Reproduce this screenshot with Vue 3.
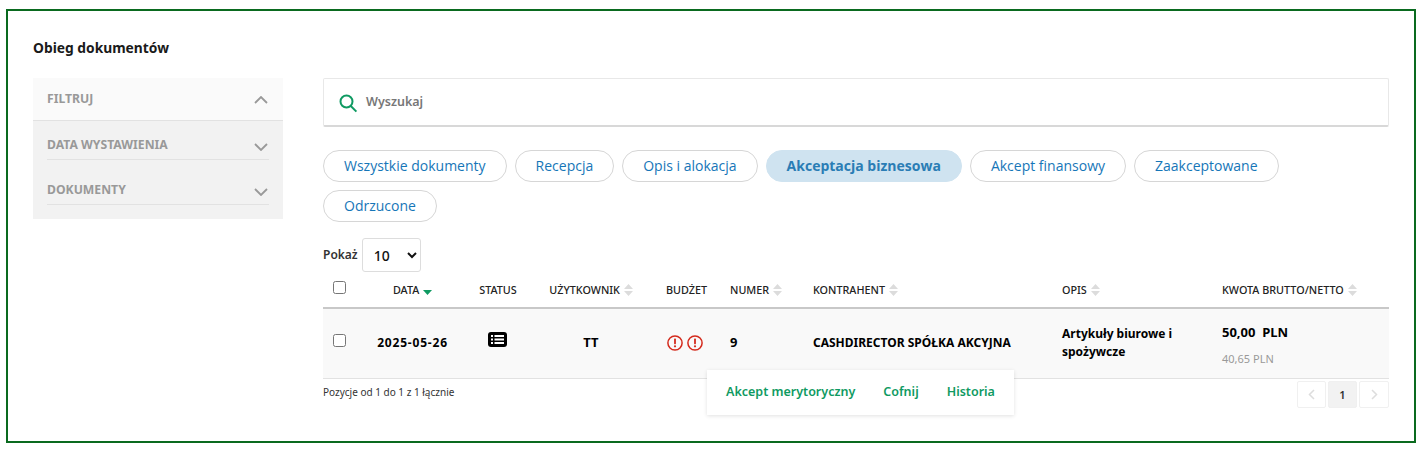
<script setup>
const filters = ['DATA WYSTAWIENIA', 'DOKUMENTY']
const tabs = [
  { label: 'Wszystkie dokumenty' },
  { label: 'Recepcja' },
  { label: 'Opis i alokacja' },
  { label: 'Akceptacja biznesowa', active: true },
  { label: 'Akcept finansowy' },
  { label: 'Zaakceptowane' },
  { label: 'Odrzucone' }
]
</script>

<template>
  <div class="frame">
    <h1 class="title">Obieg dokumentów</h1>
    <div class="columns">
      <aside class="side">
        <div class="side-head">
          <span>FILTRUJ</span>
          <svg class="chev" width="14" height="8" viewBox="0 0 14 8"><path d="M1 7l6-6 6 6" /></svg>
        </div>
        <div class="side-body">
          <div v-for="f in filters" :key="f" class="side-row">
            <span>{{ f }}</span>
            <svg class="chev" width="14" height="8" viewBox="0 0 14 8"><path d="M1 1l6 6 6-6" /></svg>
          </div>
        </div>
      </aside>

      <main class="main">
        <div class="search">
          <svg width="19" height="19" viewBox="0 0 19 19" class="search-ico">
            <circle cx="7.500" cy="7.500" r="6" />
            <path d="M11.800 12l5.600 5.600" />
          </svg>
          <span>Wyszukaj</span>
        </div>

        <div class="tabs">
          <a v-for="t in tabs" :key="t.label" class="tab" :class="{ active: t.active }">{{ t.label }}</a>
        </div>

        <div class="length">
          <span class="length-label">Pokaż</span>
          <select class="sel"><option>10</option></select>
        </div>

        <table class="grid">
          <colgroup>
            <col style="width:40px" /><col style="width:99px" /><col style="width:72px" /><col style="width:114px" />
            <col style="width:72px" /><col style="width:83px" /><col style="width:249px" /><col style="width:160px" /><col />
          </colgroup>
          <thead>
            <tr>
              <th class="chk"><input type="checkbox" /></th>
              <th class="c">DATA <svg class="sort down" width="9" height="5" viewBox="0 0 9 5"><path d="M0 0h9L4.500 5z" fill="#0f9a62" /></svg></th>
              <th class="c">STATUS</th>
              <th class="c">UŻYTKOWNIK <svg class="sort" width="9" height="12" viewBox="0 0 9 12"><path d="M0 5L4.500 0 9 5zM0 7h9l-4.500 5z" fill="#dcdcdc" /></svg></th>
              <th class="c bud">BUDŻET</th>
              <th>NUMER <svg class="sort" width="9" height="12" viewBox="0 0 9 12"><path d="M0 5L4.500 0 9 5zM0 7h9l-4.500 5z" fill="#dcdcdc" /></svg></th>
              <th>KONTRAHENT <svg class="sort" width="9" height="12" viewBox="0 0 9 12"><path d="M0 5L4.500 0 9 5zM0 7h9l-4.500 5z" fill="#dcdcdc" /></svg></th>
              <th>OPIS <svg class="sort" width="9" height="12" viewBox="0 0 9 12"><path d="M0 5L4.500 0 9 5zM0 7h9l-4.500 5z" fill="#dcdcdc" /></svg></th>
              <th>KWOTA BRUTTO/NETTO <svg class="sort" width="9" height="12" viewBox="0 0 9 12"><path d="M0 5L4.500 0 9 5zM0 7h9l-4.500 5z" fill="#dcdcdc" /></svg></th>
            </tr>
          </thead>
          <tbody>
            <tr>
              <td class="chk"><input type="checkbox" /></td>
              <td class="c date">2025-05-26</td>
              <td class="c status">
                <svg class="st" width="19" height="15" viewBox="0 0 19 15">
                  <rect width="19" height="15" rx="3" fill="#000" />
                  <path d="M3 3h2v2H3zM3 6.500h2v2H3zM3 10h2v2H3zM6.500 3H16v2H6.500zM6.500 6.500H16v2H6.500zM6.500 10H16v2H6.500z" fill="#fff" />
                </svg>
              </td>
              <td class="c big">TT</td>
              <td class="c bud">
                <span class="alerts">
                  <svg v-for="n in 2" :key="n" width="16" height="16" viewBox="0 0 16 16">
                    <circle cx="8" cy="8" r="7.100" fill="none" stroke="#d42a1c" stroke-width="1.500" />
                    <rect x="7.100" y="3.600" width="1.800" height="5.600" rx=".6" fill="#d42a1c" />
                    <circle cx="8" cy="11.300" r="1.100" fill="#d42a1c" />
                  </svg>
                </span>
              </td>
              <td class="big">9</td>
              <td>CASHDIRECTOR SPÓŁKA AKCYJNA</td>
              <td class="desc">Artykuły biurowe i spożywcze</td>
              <td class="amount">
                <div class="gross">50,00&nbsp; PLN</div>
                <div class="net">40,65 PLN</div>
              </td>
            </tr>
          </tbody>
        </table>

        <div class="foot">
          <span class="info">Pozycje od 1 do 1 z 1 łącznie</span>
          <div class="pager">
            <span class="pg"><svg width="7" height="11" viewBox="0 0 7 11"><path d="M6 1L1.500 5.500 6 10" /></svg></span>
            <span class="pg cur">1</span>
            <span class="pg"><svg width="7" height="11" viewBox="0 0 7 11"><path d="M1 1l4.500 4.500L1 10" /></svg></span>
          </div>
          <div class="actions">
            <a>Akcept merytoryczny</a>
            <a>Cofnij</a>
            <a>Historia</a>
          </div>
        </div>
      </main>
    </div>
  </div>
</template>

<style>
html, body { background: #fff; }
</style>

<style scoped>
.frame {
  box-sizing: border-box;
  width: 1410px;
  height: 434px;
  margin: 9px 0 0 6px;
  border: 2px solid #0a6a1f;
  padding: 27px 25px 0;
  font-family: "Noto Sans", sans-serif;
  color: #111;
  background: #fff;
}
.title {
  margin: 0;
  font-size: 13.800px;
  line-height: 20px;
  font-weight: 700;
  color: #1a1a1a;
}
.columns {
  display: flex;
  gap: 40px;
  margin-top: 20px;
  width: 1356px;
}
.side { width: 250px; flex: none; align-self: flex-start; background: #f2f2f2; font-size: 12.200px; font-weight: 700; color: #999; }
.side-head {
  height: 43px;
  box-sizing: border-box;
  background: #fafafa;
  border-bottom: 1px solid #e2e2e2;
  padding: 0 15px 2px 14px;
  display: flex;
  align-items: center;
  justify-content: space-between;
}
.side-body { padding: 0 14px 14px; }
.side-row {
  height: 39px;
  box-sizing: border-box;
  padding-top: 8px;
  border-bottom: 1px solid #e2e2e2;
  display: flex;
  align-items: center;
  justify-content: space-between;
}
.side-row + .side-row { margin-top: 6px; }
.chev { fill: none; stroke: #999; stroke-width: 1.800; }
.side-head .chev { margin-top: 3px; }
.side-row .chev { margin: 5px 1px 0 0; }
.main { flex: 1; min-width: 0; position: relative; }
.search {
  height: 49px;
  box-sizing: border-box;
  border: 1px solid #e8e8e8;
  border-bottom: 2px solid #d8d8d8;
  border-radius: 2px;
  padding: 0 0 2px 15px;
  display: flex;
  align-items: center;
  gap: 8px;
  font-size: 12.500px;
  font-weight: 600;
  color: #777;
}
.search-ico { fill: none; stroke: #0f9a62; stroke-width: 2; margin-top: 5px; }
.tabs { display: flex; flex-wrap: wrap; gap: 8px; margin-top: 23px; font-family: "Open Sans", sans-serif; }
.tab {
  height: 32px;
  box-sizing: border-box;
  padding: 0 20px;
  border: 1px solid #d6d6d6;
  border-radius: 16px;
  font-size: 14px;
  line-height: 30px;
  color: #1676b8;
}
.tab.active { background: #cfe3f0; border-color: #cfe3f0; font-weight: 700; color: #2a7db5; }
.length { display: flex; align-items: center; gap: 4px; margin-top: 16px; font-size: 12px; font-weight: 600; color: #333; }
.length-label { padding-bottom: 2px; }
.sel {
  width: 59px;
  height: 34px;
  box-sizing: border-box;
  border: 1px solid #ddd;
  border-radius: 3px;
  background: #fff;
  font-family: inherit;
  font-size: 14px;
  font-weight: 500;
  color: #111;
  padding-left: 7px;
}
.grid { width: 100%; table-layout: fixed; border-collapse: collapse; }
.grid th {
  height: 36px;
  box-sizing: border-box;
  padding: 0 10px;
  border-bottom: 2px solid #c8c8c8;
  font-size: 10.800px;
  font-weight: 500;
  text-align: left;
  color: #222;
  white-space: nowrap;
  vertical-align: middle;
}
.grid td {
  height: 70px;
  box-sizing: border-box;
  padding: 0 10px 2px;
  background: #f9f9f9;
  border-bottom: 1px solid #e2e2e2;
  font-size: 12px;
  font-weight: 700;
  color: #000;
  vertical-align: middle;
}
.grid .c { text-align: center; }
.grid th.c { padding: 0 2px; }
.grid th.bud { padding: 0 0 0 5px; }
.grid td.bud { padding: 0 0 2px 1px; }
.grid .date { letter-spacing: .8px; padding-left: 0; padding-right: 0; }
.grid .status { padding-right: 12px; }
.grid .big { font-size: 13px; }
.sort { vertical-align: -2px; margin-left: 1px; }
.sort.down { vertical-align: -1px; }
.chk input { margin: 0; width: 13px; height: 13px; display: block; }
.grid th.chk input { margin-top: -5px; }
.grid td.chk input { margin-top: -4px; }
.st { display: block; margin: -5px auto 0; }
.alerts { display: inline-flex; gap: 4px; vertical-align: middle; }
.grid .desc { line-height: 18px; padding-bottom: 1px; }
.grid .amount { padding-top: 4px; }
.gross { font-size: 13px; line-height: 20px; }
.net { margin-top: 9px; font-size: 11px; font-weight: 400; color: #999; }
.foot { position: relative; display: flex; justify-content: space-between; align-items: flex-start; padding-top: 2px; }
.info { font-size: 10px; line-height: 22px; color: #333; }
.pager { display: flex; gap: 2px; }
.pg {
  width: 29px;
  height: 27px;
  box-sizing: border-box;
  border: 1px solid #f0f0f0;
  border-radius: 2px;
  display: flex;
  align-items: center;
  justify-content: center;
  font-size: 11px;
  font-weight: 600;
  color: #333;
}
.pg:last-child { width: 30px; }
.pg svg { fill: none; stroke: #ddd; stroke-width: 1.500; }
.pg.cur { background: #f2f2f2; }
.actions {
  position: absolute;
  left: 384px;
  top: -9px;
  width: 307px;
  height: 45px;
  box-sizing: border-box;
  padding: 0 0 2px 19px;
  display: flex;
  align-items: center;
  gap: 28px;
  background: #fff;
  box-shadow: 0 1px 4px rgba(0, 0, 0, .12);
  font-size: 12.500px;
  font-weight: 600;
  color: #0f9a62;
}
</style>
